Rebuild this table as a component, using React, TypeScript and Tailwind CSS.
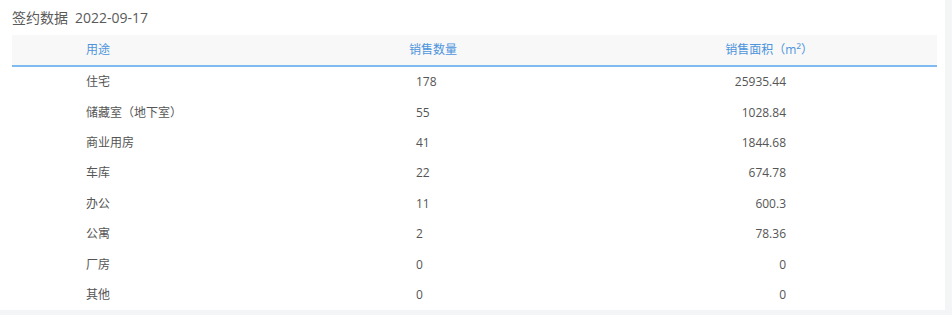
const rows = [
  { use: "住宅", count: "178", area: "25935.44" },
  { use: "储藏室（地下室）", count: "55", area: "1028.84" },
  { use: "商业用房", count: "41", area: "1844.68" },
  { use: "车库", count: "22", area: "674.78" },
  { use: "办公", count: "11", area: "600.3" },
  { use: "公寓", count: "2", area: "78.36" },
  { use: "厂房", count: "0", area: "0" },
  { use: "其他", count: "0", area: "0" },
];

export default function App() {
  return (
    <div
      className="h-[315px] w-[952px] bg-[#f4f5f7]"
      style={{ fontFamily: '"Open Sans", "Noto Sans CJK SC", sans-serif' }}
    >
      <div className="h-[310px] w-[945px] bg-white pl-3 pr-2">
        <div className="flex h-[35px] items-center pb-[1px] text-[14px] text-[#5a5a5a]">
          签约数据<span className="ml-[7px]">2022-09-17</span>
        </div>
        <div className="grid h-[32px] grid-cols-[378px_260px_1fr] items-center border-b-2 border-[#7dbbf0] bg-[#f8f8f8] text-[12px] text-[#4d94dc]">
          <div className="pl-[74px]">用途</div>
          <div className="pl-[19px]">销售数量</div>
          <div className="pr-[124px] text-right">
            销售面积（m<span className="text-[13px]">²</span>）
          </div>
        </div>
        {rows.map((r) => (
          <div
            key={r.use}
            className="grid h-[30.4px] grid-cols-[378px_260px_1fr] items-center text-[12px] text-[#555]"
          >
            <div className="pl-[74px]">{r.use}</div>
            <div className="pl-[26px]">{r.count}</div>
            <div className="pr-[151px] text-right">{r.area}</div>
          </div>
        ))}
      </div>
    </div>
  );
}
